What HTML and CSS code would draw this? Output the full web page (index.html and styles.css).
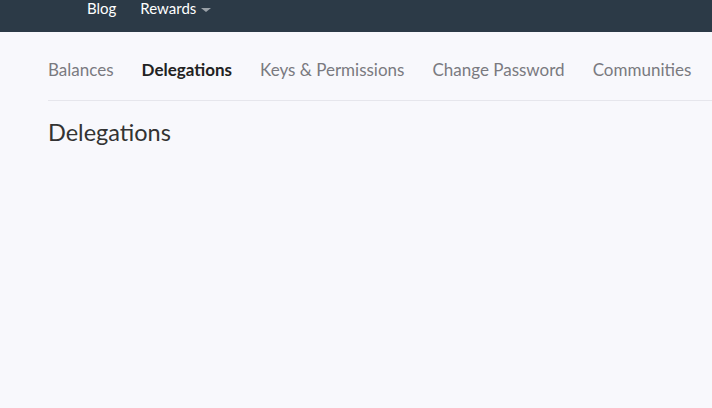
FILE: index.html
```html
<!DOCTYPE html>
<html lang="en">
  <head>
    <meta charset="UTF-8" />
    <title>Delegations</title>
    <link rel="stylesheet" href="styles.css">
  </head>
  <body>
    <div class="topbar">
      <a href="#">Blog</a>
      <a href="#">Rewards <span class="caret"></span></a>
    </div>

    <div class="content">
      <div class="tabs">
        <a href="#">Balances</a>
        <a href="#" class="active">Delegations</a>
        <a href="#">Keys &amp; Permissions</a>
        <a href="#">Change Password</a>
        <a href="#">Communities</a>
      </div>

      <h2>Delegations</h2>
    </div>
  </body>
</html>
```

FILE: styles.css
```css
body {
  margin: 0;
  background-color: #f8f8fc;
  color: #333;
  font-family: Lato, "Open Sans", sans-serif;
}

.topbar {
  height: 32px;
  background-color: #2c3a47;
  display: flex;
  align-items: flex-start;
  gap: 24px;
  padding-left: 87px;
}

.topbar a {
  color: #fff;
  text-decoration: none;
  font-size: 15px;
  line-height: 17px;
}

.caret {
  display: inline-block;
  width: 0;
  height: 0;
  margin-left: 1px;
  border-left: 5px solid transparent;
  border-right: 5px solid transparent;
  border-top: 4px solid #9aa1a8;
  vertical-align: middle;
}

.content {
  padding-left: 48px;
}

.tabs {
  display: flex;
  gap: 28px;
  height: 62px;
  padding-top: 6px;
  align-items: center;
  border-bottom: 1px solid #e6e6ec;
}

.tabs a {
  color: #7a7a80;
  text-decoration: none;
  font-size: 17px;
}

.tabs a.active {
  color: #222;
  font-weight: bold;
}

h2 {
  margin: 17px 0 0;
  font-size: 23.5px;
  font-weight: normal;
  color: #333;
}
```
